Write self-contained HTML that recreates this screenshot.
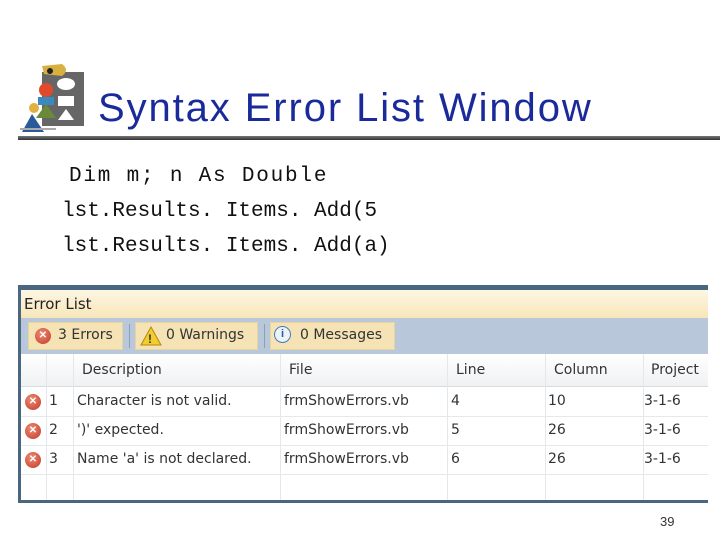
<!DOCTYPE html><html><head><style>
body{margin:0;width:720px;height:540px;background:#fff;position:relative;overflow:hidden;font-family:"Liberation Sans",sans-serif}
.a{position:absolute}
.code{font-family:"Liberation Mono",monospace;font-size:21px;color:#111;position:absolute;white-space:pre}
.win{left:18px;top:285px;width:690px;height:218px;background:#4a6680}
.t{font-family:"DejaVu Sans",sans-serif;font-size:14px;color:#333;position:absolute;white-space:nowrap}
.btn{position:absolute;top:322px;height:28px;background:#f5e3b6;border:1px solid #e8d49c;box-sizing:border-box}
.ic{position:absolute;width:16px;height:16px;border-radius:50%;background:radial-gradient(circle at 40% 35%,#f08a70,#c0392b);color:#fff;font-size:10px;text-align:center;line-height:16px;font-weight:bold}
.vl{position:absolute;top:354px;width:1px;height:146px;background:#e4e8ec}
.hl{position:absolute;left:21px;width:687px;height:1px;background:#e6e9ec}
</style></head><body>
<svg class="a" style="left:18px;top:62px" width="66" height="70">
<rect x="24" y="10" width="42" height="54" fill="#666"/>
<ellipse cx="48" cy="22" rx="9" ry="6" fill="#fff"/>
<rect x="40" y="34" width="16" height="10" fill="#fff"/>
<polygon points="48,47 40,58 56,58" fill="#fff"/>
<path d="M24 4 L44 2 Q52 8 44 14 L26 12Z" fill="#d9b040"/>
<circle cx="32" cy="9" r="3" fill="#222"/>
<circle cx="28" cy="28" r="7" fill="#e04a2a"/>
<rect x="20" y="35" width="16" height="8" fill="#3a8ac0"/>
<polygon points="28,42 18,56 38,56" fill="#6a8a3a"/>
<circle cx="16" cy="46" r="5" fill="#e0b040"/>
<polygon points="14,52 4,70 26,70" fill="#2a5a9a"/>
<rect x="2" y="66" width="36" height="2" fill="#aaa"/>
</svg>
<div class="a" style="left:98px;top:86px;font-size:40px;letter-spacing:1.9px;color:#1a2a9a;">Syntax Error List Window</div>
<div class="a" style="left:18px;top:136px;width:702px;height:4px;background:linear-gradient(#777,#333)"></div>
<div class="code" style="left:69px;top:165px;letter-spacing:1.8px">Dim m; n As Double</div>
<div class="code" style="left:62px;top:200px">lst.Results. Items. Add(5</div>
<div class="code" style="left:62px;top:235px">lst.Results. Items. Add(a)</div>
<div class="a win"></div>
<div class="a" style="left:21px;top:290px;width:687px;height:28px;background:linear-gradient(#fdf6e4,#f7e6b8)"></div>
<div class="t" style="left:24px;top:295px;font-size:15px;color:#222">Error List</div>
<div class="a" style="left:21px;top:318px;width:687px;height:36px;background:#b8c8da"></div>
<div class="btn" style="left:28px;width:95px"></div>
<div class="ic" style="left:35px;top:328px">✕</div><div class="t" style="left:58px;top:327px">3 Errors</div>
<div class="a" style="left:129px;top:324px;width:1px;height:24px;background:#8aa0b6"></div>
<div class="btn" style="left:135px;width:123px"></div>
<svg class="a" style="left:140px;top:326px" width="22" height="20"><polygon points="11,1 21,19 1,19" fill="#f3cc2e" stroke="#b08a10"/><text x="8" y="17" font-size="12" font-weight="bold" fill="#333">!</text></svg>
<div class="t" style="left:166px;top:327px">0 Warnings</div>
<div class="a" style="left:264px;top:324px;width:1px;height:24px;background:#8aa0b6"></div>
<div class="btn" style="left:270px;width:125px"></div>
<div class="a" style="left:274px;top:326px;width:17px;height:17px;border-radius:50%;border:1px solid #4a7ab0;background:#eaf2fa;box-sizing:border-box;color:#2a5a9a;font-size:11px;text-align:center;line-height:15px;font-weight:bold">i</div>
<div class="t" style="left:300px;top:327px">0 Messages</div>
<div class="a" style="left:21px;top:354px;width:687px;height:146px;background:#fff"></div>
<div class="a" style="left:21px;top:354px;width:687px;height:32px;background:linear-gradient(#fff,#f0f1f3)"></div>
<div class="hl" style="top:386px;background:#d8dde2"></div>
<div class="hl" style="top:416px"></div><div class="hl" style="top:445px"></div><div class="hl" style="top:474px"></div>
<div class="vl" style="left:46px"></div><div class="vl" style="left:73px"></div><div class="vl" style="left:280px"></div><div class="vl" style="left:447px"></div><div class="vl" style="left:545px"></div><div class="vl" style="left:643px"></div>
<div class="t" style="left:82px;top:362px">Description</div><div class="t" style="left:289px;top:362px">File</div><div class="t" style="left:456px;top:362px">Line</div><div class="t" style="left:554px;top:362px">Column</div><div class="t" style="left:651px;top:362px">Project</div>
<div class="ic" style="left:25px;top:394px">✕</div><div class="t" style="left:49px;top:393px">1</div><div class="t" style="left:77px;top:393px">Character is not valid.</div><div class="t" style="left:284px;top:393px">frmShowErrors.vb</div><div class="t" style="left:451px;top:393px">4</div><div class="t" style="left:548px;top:393px">10</div><div class="t" style="left:644px;top:393px">3-1-6</div>
<div class="ic" style="left:25px;top:423px">✕</div><div class="t" style="left:49px;top:422px">2</div><div class="t" style="left:77px;top:422px">')' expected.</div><div class="t" style="left:284px;top:422px">frmShowErrors.vb</div><div class="t" style="left:451px;top:422px">5</div><div class="t" style="left:548px;top:422px">26</div><div class="t" style="left:644px;top:422px">3-1-6</div>
<div class="ic" style="left:25px;top:452px">✕</div><div class="t" style="left:49px;top:451px">3</div><div class="t" style="left:77px;top:451px">Name 'a' is not declared.</div><div class="t" style="left:284px;top:451px">frmShowErrors.vb</div><div class="t" style="left:451px;top:451px">6</div><div class="t" style="left:548px;top:451px">26</div><div class="t" style="left:644px;top:451px">3-1-6</div>
<div class="a" style="left:660px;top:514px;font-size:13px;color:#333">39</div>
</body></html>
